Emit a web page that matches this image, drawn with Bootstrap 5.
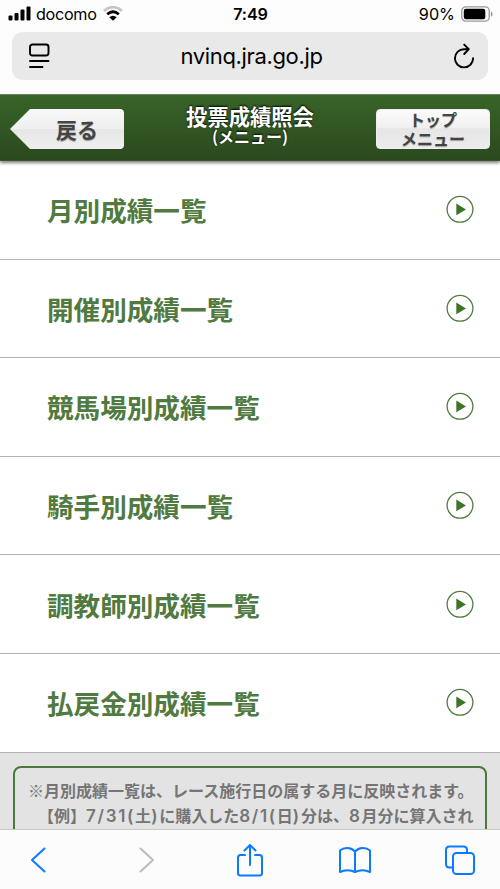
<!DOCTYPE html>
<html lang="ja">
<head>
<meta charset="utf-8">
<meta name="viewport" content="width=device-width, initial-scale=1">
<title>投票成績照会</title>
<link href="https://cdn.jsdelivr.net/npm/bootstrap@5.3.0/dist/css/bootstrap.min.css" rel="stylesheet">
<style>
body{width:500px;height:889px;background:#fdfdfd;font-family:Inter,"Noto Sans CJK JP",sans-serif;color:#000}
svg{display:block;flex:none}
.jp{font-family:"Noto Sans CJK JP",sans-serif}
.status-bar{height:32px;padding:0 7px 5px 8px;font-size:16.2px;line-height:24px}
.status-bar>div{flex:1 1 0}
.carrier{margin-left:5px;margin-right:6px;letter-spacing:-.3px}
.clock{letter-spacing:-.1px}
.power{gap:6px}
.address{height:48px;margin:0 12px 14px;border-radius:11px;background:#e9e9e9;padding:0 13px 0 16px}
.host{font-size:22px;letter-spacing:-.35px;line-height:30px}
.title-bar{height:67px;background:linear-gradient(#386428,#2b491f);border-top:1px solid #6d8464;border-bottom:1px solid #3c5333;box-shadow:0 2px 3px rgba(0,0,0,.5);padding:14px 10px 0;z-index:1;color:#fff;text-shadow:0 -1px 2px #000}
.title-block{margin-top:-4px}
.title-main{font-size:21.3px;line-height:22px;font-weight:700}
.title-sub{font-size:16px;line-height:18px;font-weight:700}
.back-tag{width:114px;height:40px;background:linear-gradient(#f8f8f8,#efefef 49%,#e7e7e7 50%,#efefef);clip-path:polygon(0 50%,20px 0,111px 0,113px 1px,114px 3px,114px 37px,113px 39px,111px 40px,20px 40px);color:#444;font-size:21px;font-weight:700;line-height:40px;padding-left:46px;text-shadow:0 1px 1px #999}
.top-tag{width:114px;height:40px;border-radius:4px;background:linear-gradient(#fbfbfb,#f0f0f0 48%,#e6e6e6 49%,#ececec);color:#444;font-size:16px;font-weight:700;line-height:19px;text-shadow:0 1px 1px #999;border:1px solid #eee}
.menu-row{height:98.6px;border-bottom:1.4px solid #b3b3b3;padding:1px 26px 0 47px;color:#507a40;background:#fff;font-size:26.6px;font-weight:700;text-decoration:none;line-height:36px}
.menu-row svg{margin-top:-2px}
.notes{background:#e3e3e3;padding:13px 13px 0}
.notes-box{height:140px;border:2px solid #4c783d;border-radius:8px;padding:10px 0 0 13px;color:#757575;font-size:16px;font-weight:700;line-height:25.3px;white-space:nowrap}
.example{padding-left:10px}
.latin{font-family:Inter,sans-serif;font-weight:600;font-size:17px;letter-spacing:1.7px;line-height:1}
.tool-bar{height:60px;background:#fcfcfd;border-top:1px solid #c9c9ca;padding:0 24px 0 30px}
.tool-bar svg{fill:none;stroke:#087bff;stroke-width:2;stroke-linejoin:round;stroke-linecap:round}
.tool-bar .forward{stroke:#bcbcbe;margin-left:93px}
.tool-bar .share{margin-left:81px}
.tool-bar .book{margin-left:74px}
.tool-bar .tabs{margin-left:72px}
</style>
<script src="https://cdn.jsdelivr.net/npm/bootstrap@5.3.0/dist/js/bootstrap.bundle.min.js"></script>
</head>
<body class="d-flex flex-column overflow-hidden m-0">
<div class="status-bar d-flex align-items-center flex-shrink-0">
  <div class="d-flex align-items-center">
    <svg width="23" height="15" viewBox="0 0 23 15"><rect x=".5" y="9.5" width="4" height="5" rx="1"/><rect x="6.5" y="7" width="4" height="7.5" rx="1"/><rect x="12.5" y="3.5" width="4" height="11" rx="1"/><rect x="18.500" y=".5" width="4" height="14" rx="1"/></svg>
    <span class="carrier">docomo</span>
    <svg width="20" height="15" viewBox="0 0 20 15" fill="none"><path d="M1 5C6-.1 14-.1 19 5" stroke="#c5c5c5" stroke-width="2.6"/><path d="M4.200 8.300q5.800-5 11.600 0" stroke="#000" stroke-width="2.8"/><path d="M6.300 11.300q3.700-3 7.400 0L10 14.800z" fill="#000"/></svg>
  </div>
  <span class="clock fw-semibold">7:49</span>
  <div class="power d-flex align-items-center justify-content-end">
    <span>90%</span>
    <svg width="32" height="16" viewBox="0 0 32 16"><rect x=".8" y=".8" width="27.400" height="14.400" rx="4" fill="none" stroke="#999" stroke-width="1.3"/><rect x="2.800" y="2.800" width="21.500" height="10.400" rx="2.200"/><path d="M29.800 5.200q1.800.9 1.800 2.800t-1.800 2.800z" fill="#999"/></svg>
  </div>
</div>
<div class="address d-flex align-items-center justify-content-between flex-shrink-0">
  <svg width="22" height="26" viewBox="0 0 22 26" fill="none" stroke="#000" stroke-width="1.9" stroke-linecap="round"><rect x="2" y="1.500" width="18.500" height="11" rx="2.500"/><path d="M2 18h18.500M2 24h12.500"/></svg>
  <span class="host">nvinq.jra.go.jp</span>
  <svg width="22" height="26" viewBox="0 0 22 26" fill="none" stroke="#000" stroke-width="1.9" stroke-linecap="round" stroke-linejoin="round"><path d="M15 6.200H11a9.100 9.100 0 1 0 9.100 9.100M11.200 1.600l4.600 4.600-4.600 4.800"/></svg>
</div>
<header class="title-bar jp d-flex justify-content-between flex-shrink-0 position-relative">
  <div class="back-tag">戻る</div>
  <div class="title-block text-center"><div class="title-main">投票成績照会</div><div class="title-sub">(メニュー)</div></div>
  <div class="top-tag text-center">トップ<br>メニュー</div>
</header>
<main class="jp flex-grow-1 overflow-hidden">
  <svg class="d-none"><symbol id="play" viewBox="0 0 28 28"><circle cx="14" cy="14.300" r="12.900" fill="none" stroke="#527d42" stroke-width="1.3"/><path d="M10.300 8.600v11.600L20 14.400z" fill="#3c7428"/></symbol></svg>
  <a class="menu-row d-flex align-items-center justify-content-between" href="#">月別成績一覧<svg width="28" height="28"><use href="#play"/></svg></a>
  <a class="menu-row d-flex align-items-center justify-content-between" href="#">開催別成績一覧<svg width="28" height="28"><use href="#play"/></svg></a>
  <a class="menu-row d-flex align-items-center justify-content-between" href="#">競馬場別成績一覧<svg width="28" height="28"><use href="#play"/></svg></a>
  <a class="menu-row d-flex align-items-center justify-content-between" href="#">騎手別成績一覧<svg width="28" height="28"><use href="#play"/></svg></a>
  <a class="menu-row d-flex align-items-center justify-content-between" href="#">調教師別成績一覧<svg width="28" height="28"><use href="#play"/></svg></a>
  <a class="menu-row d-flex align-items-center justify-content-between" href="#">払戻金別成績一覧<svg width="28" height="28"><use href="#play"/></svg></a>
  <div class="notes"><div class="notes-box">※月別成績一覧は、レース施行日の属する月に反映されます。<div class="example">【例】<span class="latin">7/31(</span>土<span class="latin">)</span>に購入した<span class="latin">8/1(</span>日<span class="latin">)</span>分は、<span class="latin">8</span>月分に算入され</div></div></div>
</main>
<nav class="tool-bar d-flex align-items-center flex-shrink-0">
  <svg class="back" width="16" height="26" viewBox="0 0 16 26"><path d="M14.500 1.500 2 13l12.500 11.500"/></svg>
  <svg class="forward" width="16" height="26" viewBox="0 0 16 26"><path d="M1.500 1.500 14 13 1.500 24.500"/></svg>
  <svg class="share" width="28" height="34" viewBox="0 0 28 34"><path d="M9 12H4.500Q2 12 2 14.500V30q0 2.500 2.500 2.500h19Q26 32.500 26 30V14.500Q26 12 23.500 12H19M14 22V2M8.500 7.500 14 2l5.500 5.500"/></svg>
  <svg class="book" width="34" height="28" viewBox="0 0 34 28"><path d="M17 5.500C13 .9 6 .9 2 4.500V26q7.500-3.500 15 0 7.500-3.500 15 0V4.500C28 .9 21 .9 17 5.500V26"/></svg>
  <svg class="tabs" width="32" height="30" viewBox="0 0 32 30"><rect x="9" y="8" width="21" height="21" rx="3.500"/><path d="M9 22.500H5.500Q2 22.500 2 19V5Q2 1.500 5.500 1.500h14Q23 1.500 23 5v3"/></svg>
</nav>
</body>
</html>
